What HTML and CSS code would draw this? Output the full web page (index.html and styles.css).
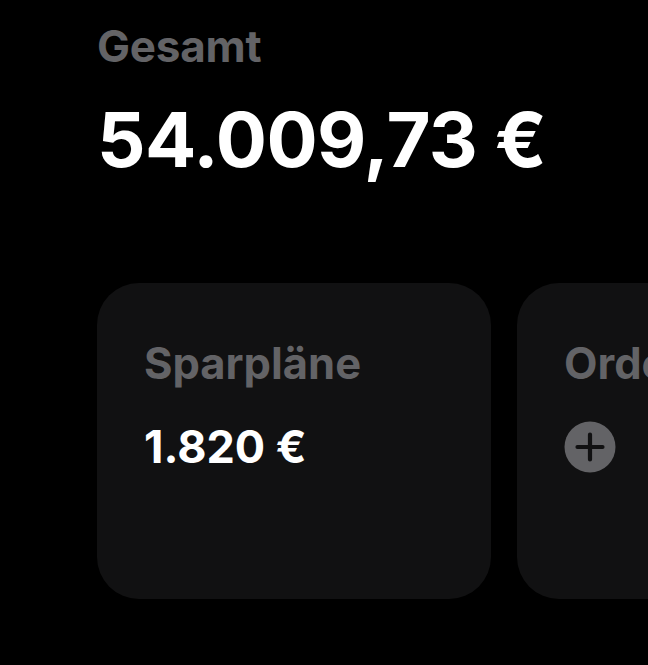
FILE: index.html
```html
<!DOCTYPE html>
<html lang="de">
<head>
<meta charset="utf-8">
<link rel="stylesheet" href="styles.css">
</head>
<body>
<main class="page">
  <section class="total">
    <div class="total-label">Gesamt</div>
    <div class="total-value">54.009,73 €</div>
  </section>
  <section class="cards">
    <div class="card">
      <div class="card-title">Sparpläne</div>
      <div class="card-value">1.820 €</div>
    </div>
    <div class="card">
      <div class="card-title">Orders</div>
      <div class="card-add">
        <svg width="52" height="52" viewBox="0 0 52 52" aria-hidden="true">
          <circle cx="26" cy="26" r="25.5" fill="#636366"/>
          <path d="M26 13.5v25M13.5 26h25" stroke="#111112" stroke-width="4.2" stroke-linecap="round"/>
        </svg>
      </div>
    </div>
  </section>
</main>
</body>
</html>
```
FILE: styles.css
```css
html, body {
  margin: 0;
  padding: 0;
  background: #000;
}
body {
  font-family: Inter, "Noto Sans", sans-serif;
  overflow: hidden;
  width: 648px;
  height: 665px;
}
.page {
  padding: 20px 0 0 97px;
}
.total-label {
  color: #636366;
  font-size: 44px;
  font-weight: 700;
  line-height: 52px;
  letter-spacing: -0.2px;
}
.total-value {
  color: #fff;
  font-size: 76px;
  font-weight: 700;
  line-height: 92px;
  margin-top: 21px;
  letter-spacing: -0.6px;
}
.cards {
  display: flex;
  gap: 26px;
  margin-top: 98px;
}
.card {
  flex: 0 0 394px;
  height: 316px;
  background: #111112;
  border-radius: 42px;
  box-sizing: border-box;
  padding: 54px 0 0 47px;
  white-space: nowrap;
}
.card-title {
  color: #636366;
  font-size: 43.5px;
  font-weight: 700;
  line-height: 52px;
}
.card-value {
  color: #fff;
  font-size: 45px;
  font-weight: 700;
  line-height: 52px;
  margin-top: 32px;
}
.card-add {
  margin-top: 32px;
  height: 52px;
}
.card-add svg {
  display: block;
}
```
